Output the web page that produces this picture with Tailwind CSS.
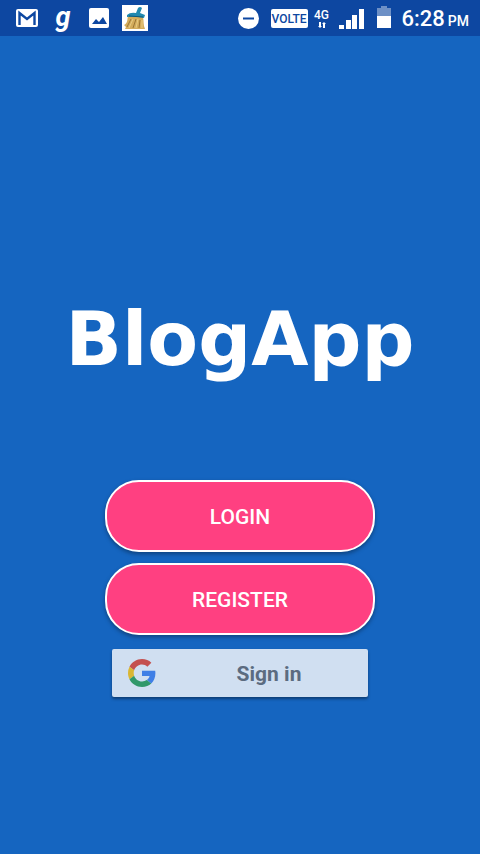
<!DOCTYPE html>
<html lang="en">
<head>
<meta charset="utf-8">
<meta name="viewport" content="width=device-width, initial-scale=1">
<title>BlogApp</title>
<script src="https://cdn.jsdelivr.net/npm/@tailwindcss/browser@4"></script>
</head>
<body class="min-h-screen flex flex-col bg-[#1565c0] font-['Roboto',sans-serif] text-white">
  <header class="h-9 shrink-0 bg-[#0d47a1] flex items-center justify-between pl-4 pr-[11px]">
    <div class="flex items-center">
      <svg class="w-[22px] h-[18px]" viewBox="0 0 22 18" aria-label="Mail"><rect width="22" height="18" rx="2" fill="#fff"/><path d="M3.500 16V4l7.500 6 7.500-6v12" fill="none" stroke="#0d47a1" stroke-width="2.400"/></svg>
      <span class="w-4 ml-[17px] h-9 text-center text-[27px] leading-[34px] font-bold italic">g</span>
      <svg class="w-5 h-5 ml-[18px]" viewBox="0 0 20 20" aria-label="Picture"><rect width="20" height="20" rx="2" fill="#fff"/><path d="M3 16l4-5 3 3 4-5 4 7z" fill="#0d47a1"/></svg>
      <svg class="w-[26px] h-[26px] ml-[13px]" viewBox="0 0 26 26" aria-label="Cleaner"><rect width="26" height="26" fill="#fff"/><path d="M6 11l15 1c1 4 0 8 2 12H3l1-2-2-2c4-2 3-5 4-9z" fill="#d3ac5c"/><path d="M9 14l-4 8M14 14l-3 9M18 15l-1 8" stroke="#9a7636" fill="none"/><path d="M11 14l-4 9M16 14l-2 9M20 15v8" stroke="#e8cb83" fill="none"/><path d="M5 10q3-3 9-2l2-5q2-2 4 0l-2 5 5 2-1 3q-9-2-17-1z" fill="#2089b0"/><path d="M7 11l14 1" stroke="#0f5878"/></svg>
    </div>
    <div class="flex items-center">
      <svg class="w-[21px] h-[21px]" viewBox="0 0 21 21" aria-label="Do not disturb"><circle cx="10.500" cy="10.500" r="10.500" fill="#fff"/><path d="M5 10.500h11" stroke="#0d47a1" stroke-width="2"/></svg>
      <span class="ml-3 w-[37px] h-[19px] rounded-xs bg-white text-[#0d47a1] text-[12px] leading-5 font-medium text-center">VOLTE</span>
      <span class="ml-[6px] w-4 h-5 flex flex-col items-center">
        <span class="text-[12px] leading-[14px] font-medium">4G</span>
        <svg class="w-2 h-[6px]" viewBox="0 0 8 6" fill="#fff" aria-hidden="true"><path d="M0 4h1V0h2v4h1L2 6zM4 2h1v4h2V2h1L6 0z"/></svg>
      </span>
      <svg class="ml-[9px] mt-[2px] w-[26px] h-5" viewBox="0 0 26 20" fill="#fff" aria-label="Signal"><path d="M0 16h5v4H0zM7 11h5v9H7zM13 6h5v14h-5zM20 0h5v20h-5z"/></svg>
      <svg class="ml-3 mb-[2px] w-[14px] h-[22px]" viewBox="0 0 14 22" fill="#fff" aria-label="Battery"><path d="M4 0h6v2h4v8H0V2h4z" opacity=".4"/><path d="M0 10h14v12H0z"/></svg>
      <span class="ml-[11px] pt-1 text-[22px] leading-6 font-medium flex items-baseline gap-[3px]"><span>6:28</span><span class="text-[14px]">PM</span></span>
    </div>
  </header>
  <main class="grow flex flex-col items-center pt-[252px] pb-10">
    <h1 class="h-[104px] text-[74px] leading-[102px] font-bold font-['DejaVu_Sans',sans-serif]">BlogApp</h1>
    <div class="w-9/16 mt-[88px] flex flex-col items-center gap-[11px]">
      <button type="button" class="w-full h-[72px] pt-1 rounded-[34px] border-2 border-white bg-[#ff4081] text-[21px] font-medium shadow-[0_2px_4px_rgba(0,0,0,0.35)]">LOGIN</button>
      <button type="button" class="w-full h-[72px] pt-1 rounded-[34px] border-2 border-white bg-[#ff4081] text-[21px] font-medium shadow-[0_2px_4px_rgba(0,0,0,0.35)]">REGISTER</button>
      <button type="button" class="w-19/20 h-12 mt-[3px] pl-4 rounded-xs bg-[#d0dff1] flex items-center text-[#5b6b80] text-[21px] font-bold shadow-[0_2px_3px_rgba(0,0,0,0.4)]">
        <svg class="w-7 h-7 shrink-0" viewBox="0 0 48 48" aria-hidden="true"><path fill="#c4504f" d="M24 9.500c3.540 0 6.710 1.220 9.210 3.600l6.850-6.850C35.900 2.380 30.470 0 24 0 14.620 0 6.510 5.380 2.560 13.220l7.980 6.190C12.430 13.720 17.740 9.500 24 9.500z"/><path fill="#3f7fe6" d="M46.980 24.550c0-1.570-.15-3.090-.38-4.550H24v9.020h12.940c-.58 2.960-2.260 5.480-4.780 7.180l7.730 6c4.510-4.180 7.090-10.360 7.090-17.650z"/><path fill="#d9b634" d="M10.530 28.590A14.500 14.500 0 0 1 9.770 24c0-1.600.27-3.140.76-4.590l-7.980-6.190A23.900 23.900 0 0 0 0 24c0 3.880.92 7.540 2.560 10.780z"/><path fill="#30986a" d="M24 48c6.480 0 11.930-2.130 15.890-5.810l-7.730-6A14.600 14.600 0 0 1 24 38.490c-6.260 0-11.570-4.220-13.470-9.910l-7.980 6.190C6.510 42.620 14.620 48 24 48z"/></svg>
        <span class="grow text-center pt-1 pl-[14px]">Sign in</span>
      </button>
    </div>
  </main>
</body>
</html>
